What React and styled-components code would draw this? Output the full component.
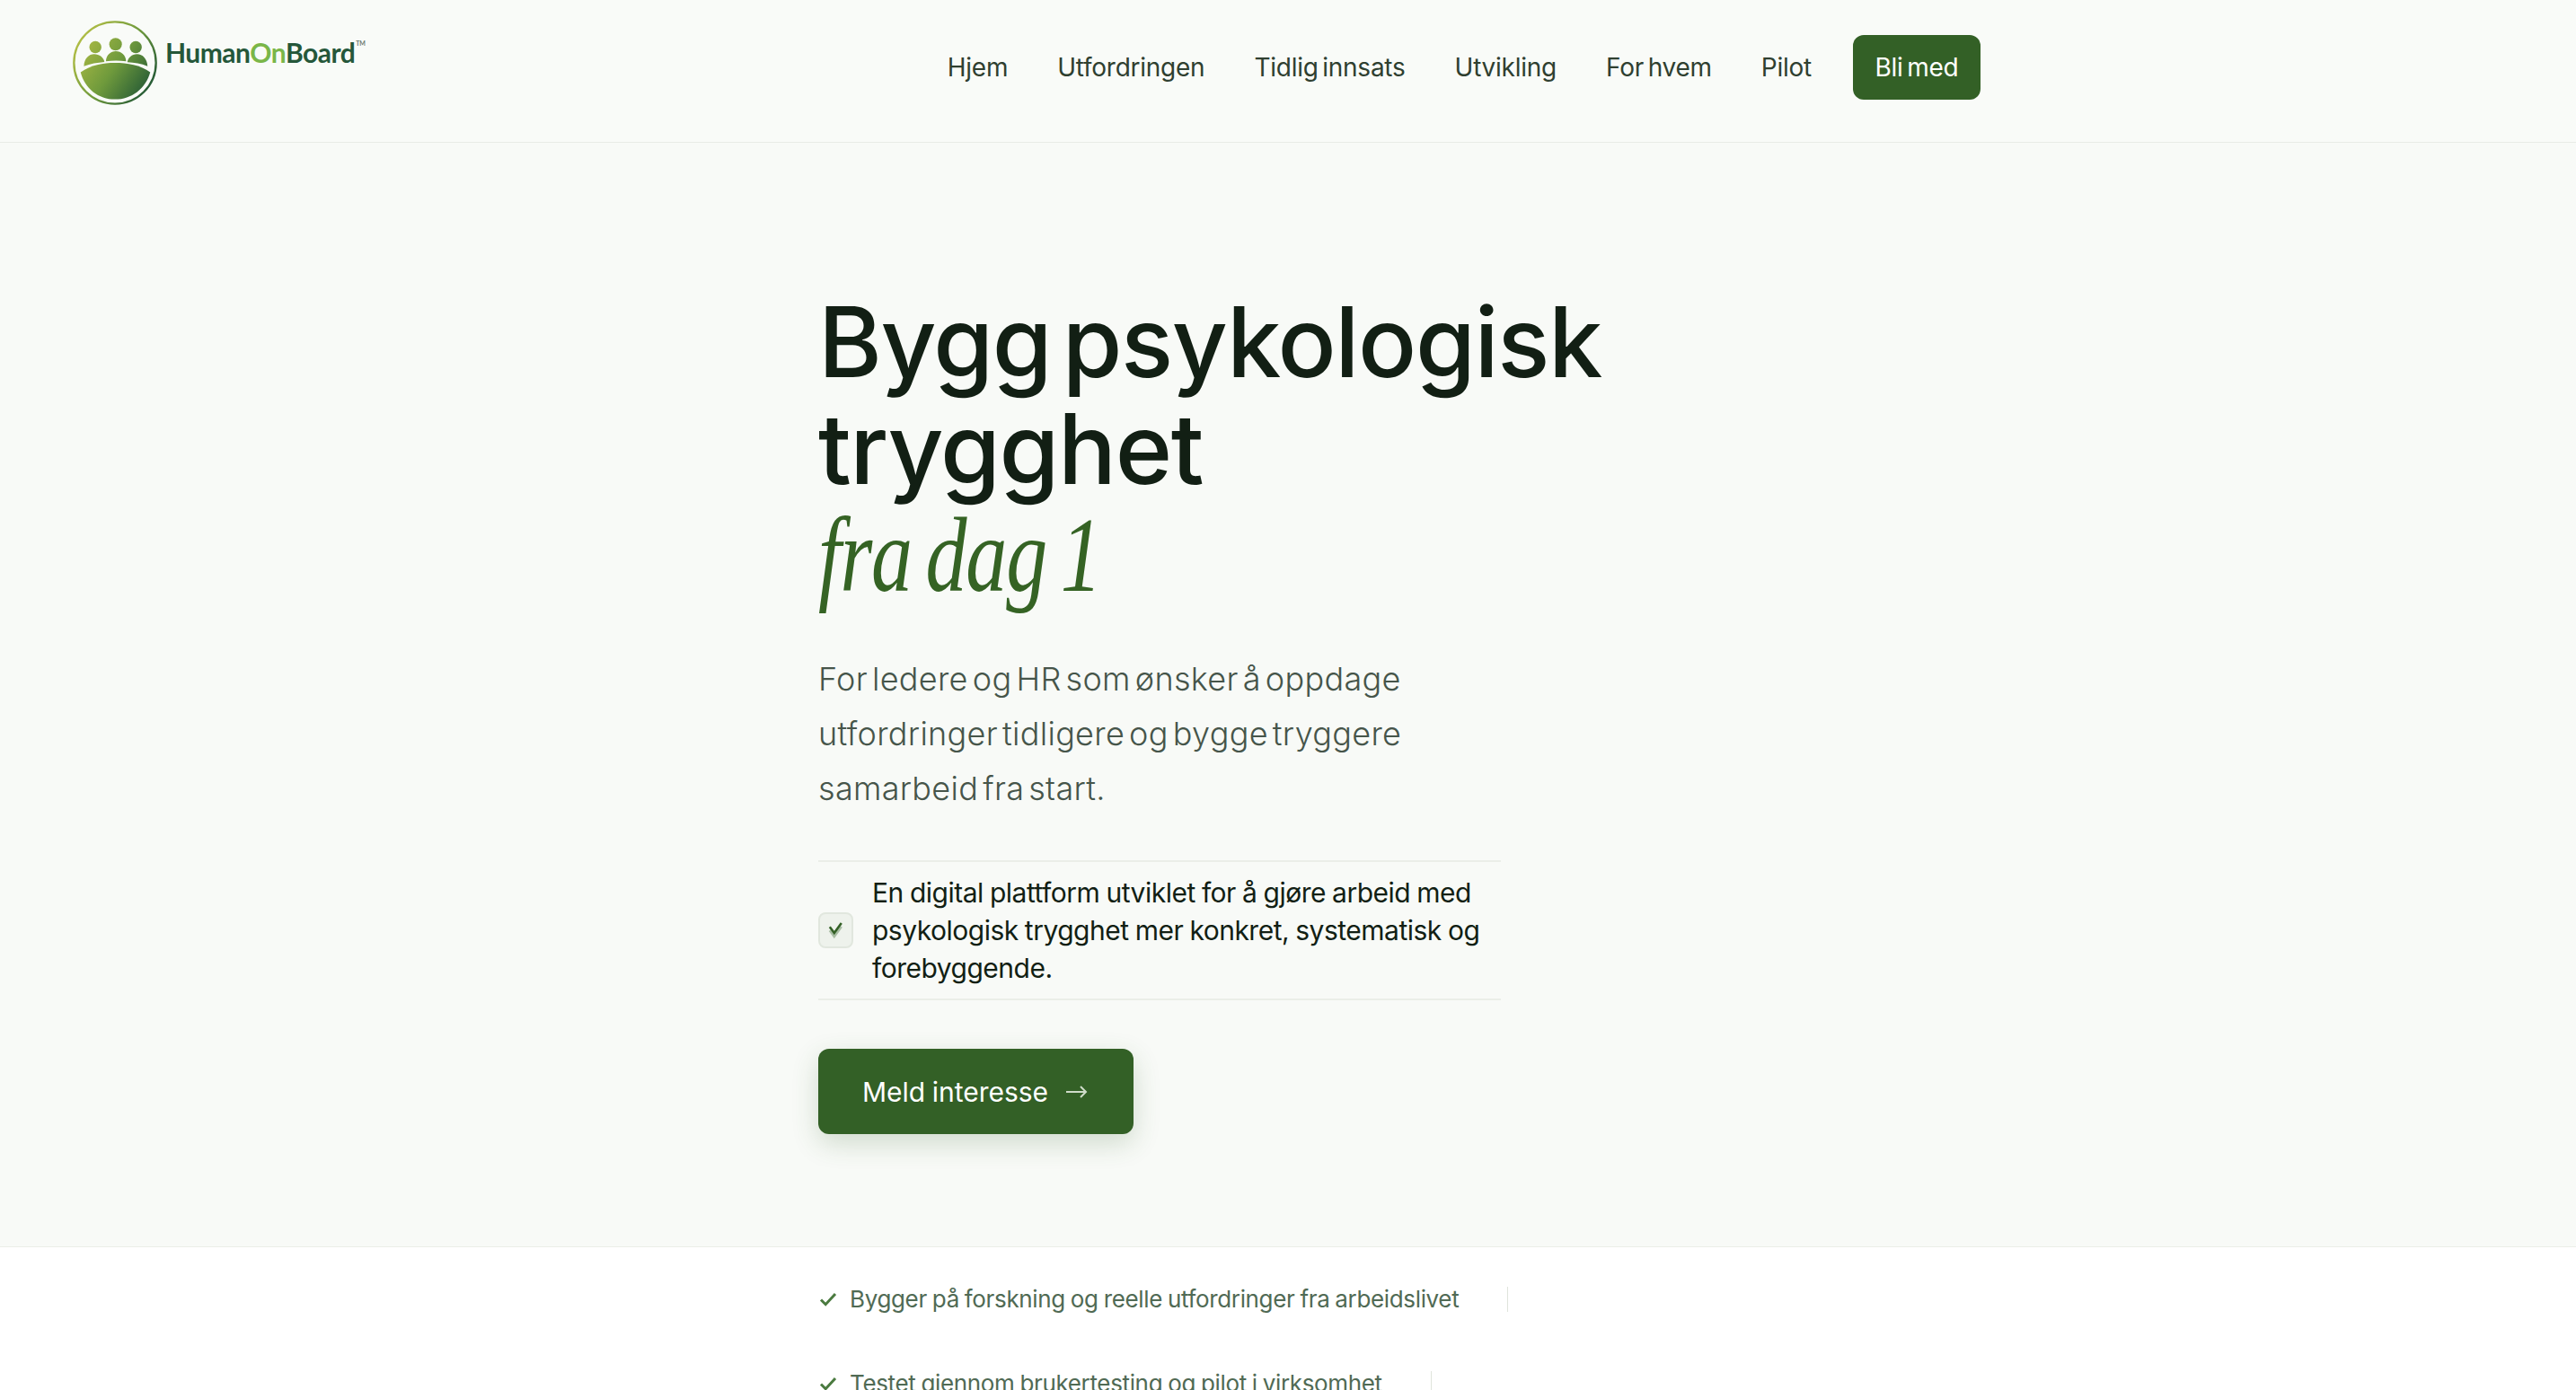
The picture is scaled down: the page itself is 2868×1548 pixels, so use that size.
import React from "react";
import styled, { createGlobalStyle } from "styled-components";

const Global = createGlobalStyle`
  html, body { margin: 0; padding: 0; background: #f8faf7; }
  #root { height: 1548px; overflow: hidden; }
  * { box-sizing: border-box; }
`;
const sans = `Inter, "Noto Sans", sans-serif`;

const Page = styled.div`font-family: ${sans}; color: #121f14;`;
const Header = styled.header`
  display: flex; justify-content: space-between; align-items: flex-start;
  height: 159px; padding: 23px 663px 0 81px;
  border-bottom: 1px solid #e9ece6; background: #f9fbf8;
`;
const Logo = styled.a`display: flex; align-items: flex-start; gap: 9px;`;
const LogoMark = styled.svg`width: 94px; height: 94px; display: block;`;
const LogoText = styled.div`
  margin-top: 17px; font-family: Lato, sans-serif; font-weight: 700; font-size: 30px;
  line-height: 36px; letter-spacing: -0.55px; color: #25573a; display: flex;
`;
const LogoOn = styled.span`color: #7ab648;`;
const Tm = styled.sup`font-size: 7px; line-height: 7px; margin: 5px 0 0 1px; color: #6d7a70; letter-spacing: 0;`;
const Nav = styled.nav`display: flex; align-items: center; gap: 55px; margin-top: 16px; height: 72px;`;
const NavLink = styled.a`font-size: 28px; line-height: 36px; color: #2f3f30; letter-spacing: -0.25px; word-spacing: -3px; font-weight: 400;`;
const NavButton = styled.a`
  margin-left: -9px; display: flex; align-items: center; justify-content: center;
  width: 142px; height: 72px; border-radius: 12px; background: #336026; color: #fff;
  font-size: 28px; letter-spacing: -0.25px; word-spacing: -3px;
`;
const Hero = styled.section`
  height: 1229px; width: 1046px; margin: 0 auto; padding-top: 162px;
`;
const HeroBand = styled.div`background: #f8faf7; border-bottom: 1px solid #ebeee8; height: 1230px;`;
const Title = styled.h1`
  margin: 0; font-size: 108px; line-height: 119px; font-weight: 500; letter-spacing: -1.4px; word-spacing: -15px; color: #121f14;
`;
const Accent = styled.em`
  display: block; font-family: "Liberation Serif", serif; font-size: 118px; font-style: italic; font-weight: 400;
  color: #356324; letter-spacing: -1.5px; word-spacing: -8px; transform: scaleX(0.78); transform-origin: left;
`;
const Lead = styled.p`
  margin: 48px 0 0; width: 760px; font-size: 36px; line-height: 61px; font-weight: 300; color: #46554a; letter-spacing: 0.3px; word-spacing: -5.4px;
`;
const Feature = styled.div`
  margin-top: 49px; width: 760px; height: 156px; display: flex; align-items: center; gap: 21px;
  border-top: 2px solid #ebeee8; border-bottom: 2px solid #ebeee8;
`;
const CheckBox = styled.div`
  flex: none; width: 39px; height: 40px; border-radius: 8px; background: #eef2ec; border: 2px solid #e1e7de;
  display: flex; align-items: center; justify-content: center;
`;
const FeatureText = styled.p`margin: 0; font-size: 30px; line-height: 42px; color: #121f14; letter-spacing: -0.5px; word-spacing: -0.8px;`;
const Cta = styled.a`
  margin-top: 54px; width: 351px; height: 95px; display: flex; align-items: center; gap: 20px; padding-left: 49px;
  background: #336026; color: #fff; border-radius: 12px; font-size: 30px; letter-spacing: 0; word-spacing: -1px;
  box-shadow: 0 10px 30px rgba(51, 96, 38, 0.2);
`;
const Strip = styled.section`background: #fff; height: 160px; padding: 44px 0 0 911px; display: flex; flex-direction: column; gap: 66px; align-items: flex-start;`;
const Proof = styled.div`display: flex; align-items: center; height: 28px;`;
const ProofText = styled.span`font-size: 26px; line-height: 28px; color: #506a54; letter-spacing: -0.35px; word-spacing: -1px; margin-left: 13px;`;
const Divider = styled.span`width: 1px; height: 28px; background: #dfe4dc; margin-left: 54px;`;

const Tick = () => (
  <svg width="22" height="22" viewBox="0 0 22 22" fill="none" stroke="#4a7a3f" strokeWidth="3">
    <path d="M3 11.5l5.2 5.2L19 5" />
  </svg>
);
const DoubleTick = () => (
  <svg width="20" height="22" viewBox="0 0 20 22" fill="none" strokeWidth="2.6">
    <path d="M2.8 11.3L7.8 18L15.8 7" stroke="#a9bda4" />
    <path d="M2.8 7.3L7.8 14L15.8 3" stroke="#336026" />
  </svg>
);

export default function App() {
  return (
    <Page>
      <Global />
      <Header>
        <Logo>
          <LogoMark viewBox="20 25 280 280">
            <defs>
              <linearGradient id="g" gradientUnits="userSpaceOnUse" x1="40" y1="90" x2="285" y2="255">
                <stop offset="0" stopColor="#b0bd45" />
                <stop offset="0.5" stopColor="#6f9a3c" />
                <stop offset="1" stopColor="#1f5535" />
              </linearGradient>
            </defs>
            <circle cx="160" cy="165" r="136" fill="none" stroke="url(#g)" strokeWidth="7" />
            <circle cx="95" cy="113" r="20" fill="url(#g)" />
            <circle cx="162" cy="103" r="21" fill="url(#g)" />
            <circle cx="229" cy="113" r="20" fill="url(#g)" />
            <path d="M57 176C58 150 74 136 91 136C108 136 124 148 125 162C102 164 78 168 57 176Z" fill="url(#g)" />
            <path d="M130 160C131 138 146 126 163 126C180 126 196 138 197 160C175 157 152 157 130 160Z" fill="url(#g)" />
            <path d="M201 163C203 148 216 136 233 136C252 136 267 152 268 176C247 168 224 164 201 163Z" fill="url(#g)" />
            <path d="M46 196C80 172 120 165 160 165C200 165 245 172 277 196C262 250 215 286 160 286C105 286 60 250 46 196Z" fill="url(#g)" />
          </LogoMark>
          <LogoText>Human<LogoOn>On</LogoOn>Board<Tm>TM</Tm></LogoText>
        </Logo>
        <Nav>
          <NavLink>Hjem</NavLink>
          <NavLink>Utfordringen</NavLink>
          <NavLink>Tidlig innsats</NavLink>
          <NavLink>Utvikling</NavLink>
          <NavLink>For hvem</NavLink>
          <NavLink>Pilot</NavLink>
          <NavButton>Bli med</NavButton>
        </Nav>
      </Header>
      <HeroBand>
        <Hero>
          <Title>
            Bygg psykologisk trygghet
            <Accent>fra dag 1</Accent>
          </Title>
          <Lead>For ledere og HR som ønsker å oppdage utfordringer tidligere og bygge tryggere samarbeid fra start.</Lead>
          <Feature>
            <CheckBox><DoubleTick /></CheckBox>
            <FeatureText>En digital plattform utviklet for å gjøre arbeid med psykologisk trygghet mer konkret, systematisk og forebyggende.</FeatureText>
          </Feature>
          <Cta>Meld interesse <svg width="24" height="16" viewBox="0 0 24 16" fill="none" stroke="#cfdcc9" strokeWidth="2"><path d="M0 8h22M16 2l6 6-6 6" /></svg></Cta>
        </Hero>
      </HeroBand>
      <Strip>
        <Proof><Tick /><ProofText>Bygger på forskning og reelle utfordringer fra arbeidslivet</ProofText><Divider /></Proof>
        <Proof><Tick /><ProofText>Testet gjennom brukertesting og pilot i virksomhet</ProofText><Divider /></Proof>
      </Strip>
    </Page>
  );
}
